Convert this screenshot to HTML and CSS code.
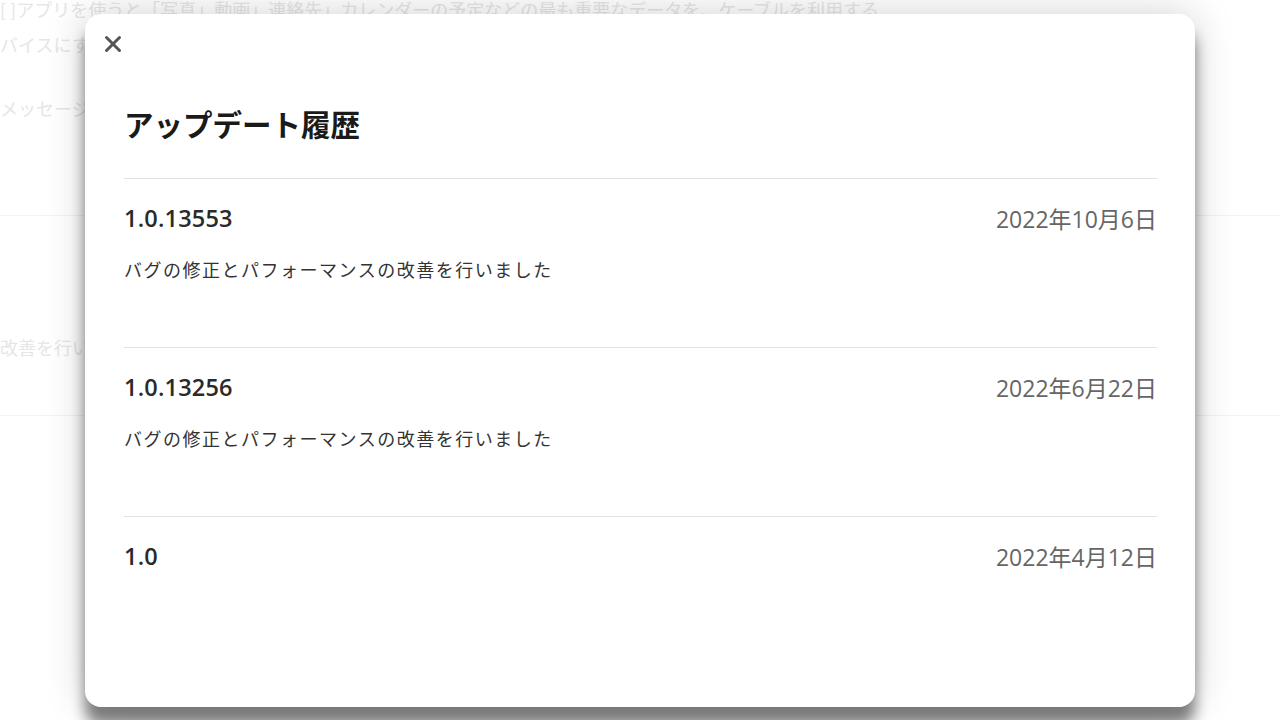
FILE: index.html
```html
<!DOCTYPE html>
<html lang="ja">
<head>
<meta charset="utf-8">
<title>アップデート履歴</title>
<link rel="stylesheet" href="styles.css">
</head>
<body>
<div class="page">
  <p class="bg-line bg-first">[ ]アプリを使うと「写真」動画」連絡先」カレンダーの予定などの最も重要なデータを、ケーブルを利用する</p>
  <p class="bg-line bg-second">バイスにすべて転送できます</p>
  <p class="bg-line bg-third">メッセージ</p>
  <div class="bg-rule"></div>
  <p class="bg-line bg-fourth">改善を行いました</p>
  <div class="bg-rule bg-rule2"></div>
</div>

<div class="modal" role="dialog" aria-label="アップデート履歴">
  <button class="close" aria-label="閉じる">
    <svg viewBox="0 0 18 18" width="18" height="18"><path d="M2.5 2.5 L15.5 15.5 M15.5 2.5 L2.5 15.5" stroke="#555" stroke-width="3" stroke-linecap="round"/></svg>
  </button>
  <h1 class="title">アップデート履歴</h1>
  <ul class="list">
    <li class="entry">
      <div class="head"><span class="ver">1.0.13553</span><span class="date">2022年10月6日</span></div>
      <p class="desc">バグの修正とパフォーマンスの改善を行いました</p>
    </li>
    <li class="entry">
      <div class="head"><span class="ver">1.0.13256</span><span class="date">2022年6月22日</span></div>
      <p class="desc">バグの修正とパフォーマンスの改善を行いました</p>
    </li>
    <li class="entry">
      <div class="head"><span class="ver">1.0</span><span class="date">2022年4月12日</span></div>
    </li>
  </ul>
</div>
</body>
</html>
```
FILE: styles.css
```css
html, body {
  margin: 0;
  padding: 0;
  width: 1280px;
  height: 720px;
  overflow: hidden;
  background: #ffffff;
  font-family: "Noto Sans CJK JP", "Noto Sans", sans-serif;
}

.page {
  width: 1280px;
  height: 720px;
  overflow: hidden;
  color: #e6e6e6;
  font-size: 18px;
}

.bg-line {
  margin: 0;
  line-height: 24px;
  white-space: nowrap;
}

.bg-first { margin-top: 0; line-height: 18px; }
.bg-second { margin-top: 14px; }
.bg-third { margin-top: 40px; }
.bg-rule {
  height: 1px;
  background: #f3f3f3;
  margin-top: 95px;
  width: 100%;
}
.bg-fourth { margin-top: 119px; }
.bg-rule2 { margin-top: 56px; }

.modal {
  position: absolute;
  left: 85px;
  top: 14px;
  width: 1110px;
  height: 693px;
  box-sizing: border-box;
  background: #fff;
  border-radius: 16px;
  padding: 0 38px 0 39px;
  box-shadow: 0 18px 14px rgba(0, 0, 0, 0.48), 0 0 40px rgba(0, 0, 0, 0.18);
}

.close {
  position: absolute;
  left: 19px;
  top: 21px;
  width: 18px;
  height: 18px;
  padding: 0;
  border: 0;
  background: none;
  display: flex;
}

.title {
  margin: 89px 0 35px;
  font-size: 29.5px;
  line-height: 40px;
  font-weight: 700;
  color: #1a1a1a;
}

.list {
  list-style: none;
  margin: 0;
  padding: 0;
}

.entry {
  border-top: 1px solid #e2e2e2;
  padding: 25px 0 66px;
}

.head {
  display: flex;
  justify-content: space-between;
  align-items: center;
  height: 28px;
}

.ver {
  font-family: "Open Sans", "Noto Sans CJK JP", sans-serif;
  font-size: 23.5px;
  font-weight: 600;
  color: #2a2a2a;
  letter-spacing: 0.2px;
}

.date {
  font-family: "Open Sans", "Noto Sans CJK JP", sans-serif;
  font-size: 23px;
  color: #666;
}

.desc {
  margin: 25px 0 0;
  font-size: 18px;
  line-height: 24px;
  color: #333;
  letter-spacing: 1.5px;
}
```
